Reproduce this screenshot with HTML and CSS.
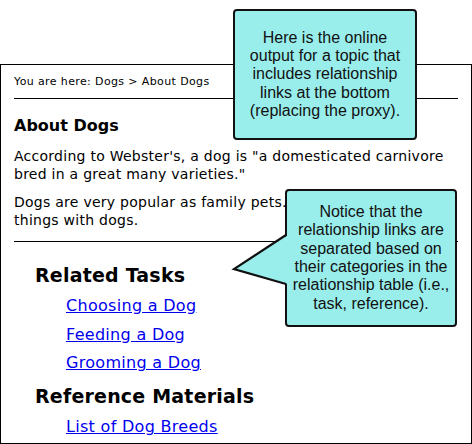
FILE: index.html
```html
<!DOCTYPE html>
<html lang="en">
<head>
<meta charset="utf-8">
<title>About Dogs</title>
<link rel="stylesheet" href="styles.css">
</head>
<body>
<div class="page">
  <div class="topic">
    <p class="crumbs">You are here: Dogs &gt; About Dogs</p>
    <hr class="rule">
    <h1 class="title">About Dogs</h1>
    <p class="body-text">According to Webster's, a dog is "a domesticated carnivore<br>bred in a great many varieties."</p>
    <p class="body-text">Dogs are very popular as family pets. People do many<br>things with dogs.</p>
    <hr class="rule rule-bottom">
    <section class="related">
      <h2 class="related-head">Related Tasks</h2>
      <ul class="links">
        <li><a href="#">Choosing a Dog</a></li>
        <li><a href="#">Feeding a Dog</a></li>
        <li><a href="#">Grooming a Dog</a></li>
      </ul>
      <h2 class="related-head related-head-next">Reference Materials</h2>
      <ul class="links">
        <li><a href="#">List of Dog Breeds</a></li>
      </ul>
    </section>
  </div>

  <div class="callout callout-top">
    <p class="callout-text">Here is the online<br>output for a topic that<br>includes relationship<br>links at the bottom<br>(replacing the proxy).</p>
  </div>

  <div class="callout callout-side">
    <svg class="pointer" width="60" height="60" viewBox="0 0 60 60" aria-hidden="true">
      <polygon points="2,39 56,5 56,54" fill="#99eeec"/>
      <polyline points="54,5 2,39 54,54" fill="none" stroke="#111" stroke-width="2.2" stroke-linejoin="miter"/>
    </svg>
    <p class="callout-text">Notice that the<br>relationship links are<br>separated based on<br>their categories in the<br>relationship table (i.e.,<br>task, reference).</p>
  </div>
</div>
</body>
</html>
```

FILE: styles.css
```css
html, body {
  margin: 0;
  padding: 0;
  background: #ffffff;
}

.page {
  position: relative;
  width: 472px;
  height: 444px;
  padding-top: 64px;
  box-sizing: border-box;
  overflow: hidden;
}

.topic {
  height: 380px;
  box-sizing: border-box;
  border: 1px solid #000;
  padding: 10px 13px 0;
  font-family: "DejaVu Sans", Verdana, sans-serif;
  color: #000;
}

.crumbs {
  margin: 0;
  font-size: 11px;
  line-height: 14px;
  letter-spacing: 0.38px;
}

.rule {
  height: 0;
  border: 0;
  border-top: 1px solid #000;
  margin: 9px 0 0;
}

.rule-bottom {
  margin-top: 12px;
}

.title {
  margin: 17px 0 0;
  font-size: 16px;
  line-height: 20px;
  font-weight: bold;
}

.body-text {
  margin: 12px 0 0;
  font-size: 14px;
  line-height: 17.5px;
  letter-spacing: 0.26px;
  white-space: nowrap;
}

.body-text + .body-text {
  margin-top: 11px;
}

.related {
  padding-left: 21px;
}

.related-head {
  margin: 21px 0 0;
  font-size: 19px;
  line-height: 24px;
  font-weight: bold;
  letter-spacing: 0.2px;
}

.related-head-next {
  margin-top: 11px;
}

.links {
  list-style: none;
  margin: 9px 0 0;
  padding: 0 0 0 31px;
  display: flex;
  flex-direction: column;
  gap: 8.5px;
}

.links li {
  font-size: 16px;
  line-height: 20px;
  letter-spacing: 0.3px;
}

.links a {
  color: #0000ee;
  text-decoration: underline;
}

.callout {
  position: absolute;
  box-sizing: border-box;
  border: 2px solid #111;
  border-radius: 4px;
  background: #99eeec;
  display: flex;
  align-items: center;
  justify-content: center;
}

.callout-text {
  margin: 0;
  font-family: "Liberation Sans", Arial, sans-serif;
  font-size: 16px;
  line-height: 18.3px;
  text-align: center;
  color: #111;
  white-space: nowrap;
}

.callout-top {
  left: 233px;
  top: 9px;
  width: 184px;
  height: 131px;
}

.callout-side {
  left: 285px;
  top: 189px;
  width: 172px;
  height: 138px;
}

.pointer {
  position: absolute;
  left: -55px;
  top: 39px;
  overflow: visible;
}
```
